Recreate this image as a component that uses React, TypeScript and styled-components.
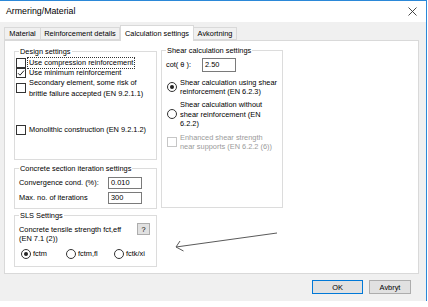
import React from "react";
import styled, { createGlobalStyle } from "styled-components";

const GlobalStyle = createGlobalStyle`
  html, body {
    margin: 0;
    padding: 0;
    background: #ffffff;
  }
  body {
    font-family: "Liberation Sans", Arial, sans-serif;
    color: #000;
  }
`;

const Window = styled.div`
  position: relative;
  width: 426px;
  height: 300px;
  border-top: 1px solid #2b88d8;
  border-right: 1px solid #2b88d8;
  background: #f0f0f0;
  display: flex;
  flex-direction: column;
  font-size: 7.4px;
  line-height: 9px;
`;
const TitleBar = styled.div`
  height: 21px;
  background: #fff;
  display: flex;
  align-items: center;
  justify-content: space-between;
  padding: 0 9px 0 6px;
  font-size: 8.8px;
`;
const CloseIcon = styled.svg`
  display: block;
`;
const Body = styled.div`
  flex: 1;
  display: flex;
  flex-direction: column;
  padding: 3px 0 0 4px;
`;
const TabRow = styled.div`
  display: flex;
  align-items: flex-end;
  height: 15px;
`;
const Tab = styled.div<{ $w: number; $active?: boolean }>`
  box-sizing: border-box;
  width: ${(p) => p.$w}px;
  height: ${(p) => (p.$active ? 16 : 13)}px;
  margin-bottom: ${(p) => (p.$active ? -1 : 0)}px;
  border: 1px solid #d9d9d9;
  border-bottom: ${(p) => (p.$active ? "none" : "1px solid #d9d9d9")};
  border-left: ${(p) => (p.$active ? "1px solid #d9d9d9" : "none")};
  background: ${(p) => (p.$active ? "#fff" : "#f0f0f0")};
  display: flex;
  align-items: center;
  justify-content: center;
  white-space: nowrap;
  z-index: ${(p) => (p.$active ? 1 : 0)};
  &:first-child {
    border-left: 1px solid #d9d9d9;
  }
`;
const Panel = styled.div`
  box-sizing: border-box;
  width: 415px;
  height: 234px;
  background: #fff;
  border: 1px solid #d9d9d9;
  padding: 0 0 0 9px;
  display: grid;
  grid-template-columns: 143px 122px;
  column-gap: 4px;
  align-items: start;
`;
const Column = styled.div`
  display: flex;
  flex-direction: column;
`;
const Group = styled.div<{ $h: number; $top: number }>`
  box-sizing: border-box;
  height: ${(p) => p.$h}px;
  margin-top: ${(p) => p.$top}px;
  border: 1px solid #dcdcdc;
  display: flex;
  flex-direction: column;
`;
const Legend = styled.div`
  align-self: flex-start;
  margin: -5.5px 0 0 4px;
  padding: 0 1px;
  background: #fff;
  line-height: 9px;
  white-space: nowrap;
`;
const OptionRow = styled.div<{ $top?: number; $left?: number; $lh?: number }>`
  display: flex;
  align-items: center;
  gap: 2px;
  margin-top: ${(p) => p.$top ?? 0}px;
  padding-left: ${(p) => p.$left ?? 1}px;
  line-height: ${(p) => p.$lh ?? 10}px;
  white-space: nowrap;
`;
const Label = styled.span<{ $disabled?: boolean; $focus?: boolean }>`
  color: ${(p) => (p.$disabled ? "#9a9a9a" : "#000")};
  padding: 0 1px;
  outline: ${(p) => (p.$focus ? "1px dotted #333" : "none")};
  outline-offset: 0;
`;
const CheckBox = styled.span<{ $disabled?: boolean }>`
  box-sizing: border-box;
  flex: none;
  width: 10px;
  height: 10px;
  border: 1px solid ${(p) => (p.$disabled ? "#c6c6c6" : "#333")};
  background: #fff;
  display: flex;
  align-items: center;
  justify-content: center;
`;
const Radio = styled.span`
  box-sizing: border-box;
  flex: none;
  width: 10px;
  height: 10px;
  border: 1px solid #333;
  border-radius: 50%;
  background: #fff;
  display: flex;
  align-items: center;
  justify-content: center;
`;
const RadioDot = styled.span`
  width: 4px;
  height: 4px;
  border-radius: 50%;
  background: #222;
`;
const FieldRow = styled.div<{ $top: number; $labelW: number }>`
  display: grid;
  grid-template-columns: ${(p) => p.$labelW}px auto;
  align-items: center;
  margin-top: ${(p) => p.$top}px;
  padding-left: 4px;
`;
const TextBox = styled.div<{ $w: number; $h: number }>`
  box-sizing: border-box;
  width: ${(p) => p.$w}px;
  height: ${(p) => p.$h}px;
  border: 1px solid #7a7a7a;
  background: #fff;
  padding-left: 2px;
  display: flex;
  align-items: center;
`;
const HelpRow = styled.div`
  display: flex;
  justify-content: space-between;
  margin-top: 3.5px;
  padding: 0 6px 0 4px;
`;
const HelpText = styled.div`
  padding-top: 2px;
  line-height: 9.3px;
`;
const SmallButton = styled.div`
  box-sizing: border-box;
  width: 13px;
  height: 12px;
  background: #e1e1e1;
  border: 1px solid #adadad;
  display: flex;
  align-items: center;
  justify-content: center;
`;
const RadioGroupRow = styled.div`
  display: flex;
  margin-top: 5.5px;
  padding-left: 6px;
`;
const RadioOption = styled.div<{ $w: number }>`
  width: ${(p) => p.$w}px;
  display: flex;
  align-items: center;
  gap: 2px;
  line-height: 10px;
`;
const Footer = styled.div`
  display: flex;
  justify-content: flex-end;
  gap: 6px;
  margin-top: 6px;
  padding-right: 15px;
`;
const Button = styled.div<{ $w: number; $primary?: boolean }>`
  box-sizing: border-box;
  width: ${(p) => p.$w}px;
  height: 14px;
  background: #e1e1e1;
  border: ${(p) => (p.$primary ? "1.5px solid #0078d7" : "1px solid #adadad")};
  display: flex;
  align-items: center;
  justify-content: center;
`;
const ArrowLayer = styled.svg`
  position: absolute;
  left: 0;
  top: -1px;
  pointer-events: none;
`;

function Check() {
  return (
    <svg width="8" height="8" viewBox="0 0 8 8">
      <path d="M1 4.2 L3 6.2 L7 1.6" fill="none" stroke="#222" strokeWidth="1" />
    </svg>
  );
}

export default function App() {
  return (
    <>
      <GlobalStyle />
      <Window>
        <TitleBar>
          <span>Armering/Material</span>
          <CloseIcon width="9" height="9" viewBox="0 0 9 9">
            <path d="M0.5 0.5 L8.5 8.5 M8.5 0.5 L0.5 8.5" stroke="#333" strokeWidth="0.9" />
          </CloseIcon>
        </TitleBar>
        <Body>
          <TabRow>
            <Tab $w={37}>Material</Tab>
            <Tab $w={79}>Reinforcement details</Tab>
            <Tab $w={74} $active>
              Calculation settings
            </Tab>
            <Tab $w={43}>Avkortning</Tab>
          </TabRow>
          <Panel>
            <Column>
              <Group $h={109} $top={10}>
                <Legend>Design settings</Legend>
                <OptionRow $top={2}>
                  <CheckBox />
                  <Label $focus>Use compression reinforcement</Label>
                </OptionRow>
                <OptionRow $top={0.5}>
                  <CheckBox>
                    <Check />
                  </CheckBox>
                  <Label>Use minimum reinforcement</Label>
                </OptionRow>
                <OptionRow $top={-1} $lh={11}>
                  <CheckBox />
                  <Label>
                    Secondary element, some risk of
                    <br />
                    brittle failure accepted (EN 9.2.1.1)
                  </Label>
                </OptionRow>
                <OptionRow $top={26}>
                  <CheckBox />
                  <Label>Monolithic construction (EN 9.2.1.2)</Label>
                </OptionRow>
              </Group>
              <Group $h={41} $top={8}>
                <Legend>Concrete section iteration settings</Legend>
                <FieldRow $top={4} $labelW={89}>
                  <span>Convergence cond. (%):</span>
                  <TextBox $w={34} $h={12}>0.010</TextBox>
                </FieldRow>
                <FieldRow $top={3} $labelW={89}>
                  <span>Max. no. of iterations</span>
                  <TextBox $w={34} $h={12}>300</TextBox>
                </FieldRow>
              </Group>
              <Group $h={52} $top={6}>
                <Legend>SLS Settings</Legend>
                <HelpRow>
                  <HelpText>
                    Concrete tensile strength fct,eff
                    <br />
                    (EN 7.1 (2))
                  </HelpText>
                  <SmallButton>?</SmallButton>
                </HelpRow>
                <RadioGroupRow>
                  <RadioOption $w={45}>
                    <Radio>
                      <RadioDot />
                    </Radio>
                    <span>fctm</span>
                  </RadioOption>
                  <RadioOption $w={48}>
                    <Radio />
                    <span>fctm,fl</span>
                  </RadioOption>
                  <RadioOption $w={40}>
                    <Radio />
                    <span>fctk/xi</span>
                  </RadioOption>
                </RadioGroupRow>
              </Group>
            </Column>
            <Column>
              <Group $h={158} $top={9}>
                <Legend>Shear calculation settings</Legend>
                <FieldRow $top={3} $labelW={36}>
                  <span>cot( θ ):</span>
                  <TextBox $w={34} $h={14}>2.50</TextBox>
                </FieldRow>
                <OptionRow $top={6.5} $left={5} $lh={9}>
                  <Radio>
                    <RadioDot />
                  </Radio>
                  <Label>
                    Shear calculation using shear
                    <br />
                    reinforcement (EN 6.2.3)
                  </Label>
                </OptionRow>
                <OptionRow $top={4} $left={5} $lh={9.5}>
                  <Radio />
                  <Label>
                    Shear calculation without
                    <br />
                    shear reinforcement (EN
                    <br />
                    6.2.2)
                  </Label>
                </OptionRow>
                <OptionRow $top={4.5} $left={5} $lh={9}>
                  <CheckBox $disabled />
                  <Label $disabled>
                    Enhanced shear strength
                    <br />
                    near supports (EN 6.2.2 (6))
                  </Label>
                </OptionRow>
              </Group>
            </Column>
          </Panel>
          <Footer>
            <Button $w={51} $primary>
              OK
            </Button>
            <Button $w={42}>Avbryt</Button>
          </Footer>
        </Body>
        <ArrowLayer width="428" height="307" viewBox="0 0 428 307">
          <path d="M277 233 L176 247" stroke="#5a5a5a" strokeWidth="1" fill="none" />
          <path d="M180 241 L176 247 L183.5 251" stroke="#5a5a5a" strokeWidth="1" fill="none" />
        </ArrowLayer>
      </Window>
    </>
  );
}
